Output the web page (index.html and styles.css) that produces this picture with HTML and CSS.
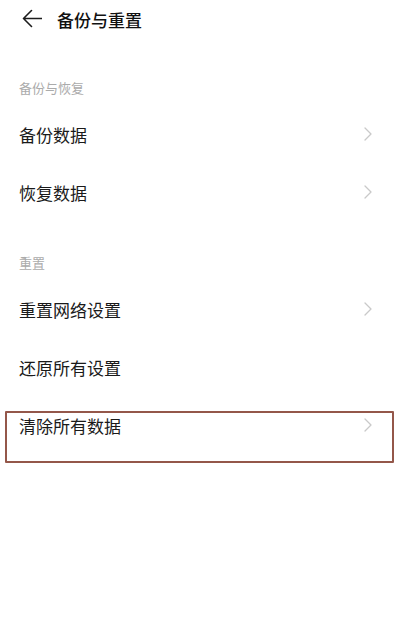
FILE: index.html
```html
<!DOCTYPE html>
<html lang="zh-CN">
<head>
<meta charset="utf-8">
<title>备份与重置</title>
<link rel="stylesheet" href="styles.css">
</head>
<body>
<div class="page">
  <header class="topbar">
    <svg class="back" width="20" height="20" viewBox="0 0 20 20" aria-hidden="true">
      <path d="M19.5 9.5H1.5M9.5 1.5L1.5 9.5L9.5 17.5" fill="none" stroke="#1c1c1c" stroke-width="1.6" stroke-linecap="round" stroke-linejoin="round"/>
    </svg>
    <h1 class="title">备份与重置</h1>
  </header>

  <section class="group group-first">
    <div class="group-label">备份与恢复</div>
    <div class="row"><span class="row-text">备份数据</span><svg class="chev" width="8" height="14" viewBox="0 0 8 14"><path d="M1 1L7 7L1 13" fill="none" stroke="#c9c9c9" stroke-width="1.3" stroke-linecap="round" stroke-linejoin="round"/></svg></div>
    <div class="row"><span class="row-text">恢复数据</span><svg class="chev" width="8" height="14" viewBox="0 0 8 14"><path d="M1 1L7 7L1 13" fill="none" stroke="#c9c9c9" stroke-width="1.3" stroke-linecap="round" stroke-linejoin="round"/></svg></div>
  </section>

  <section class="group">
    <div class="group-label">重置</div>
    <div class="row"><span class="row-text">重置网络设置</span><svg class="chev" width="8" height="14" viewBox="0 0 8 14"><path d="M1 1L7 7L1 13" fill="none" stroke="#c9c9c9" stroke-width="1.3" stroke-linecap="round" stroke-linejoin="round"/></svg></div>
    <div class="row"><span class="row-text">还原所有设置</span></div>
    <div class="row row-marked"><span class="row-text">清除所有数据</span><svg class="chev" width="8" height="14" viewBox="0 0 8 14"><path d="M1 1L7 7L1 13" fill="none" stroke="#c9c9c9" stroke-width="1.3" stroke-linecap="round" stroke-linejoin="round"/></svg><span class="highlight"></span></div>
  </section>
</div>
</body>
</html>
```

FILE: styles.css
```css
html, body {
  margin: 0;
  padding: 0;
  background: #ffffff;
}

body {
  font-family: "Noto Sans CJK SC", "Noto Sans", sans-serif;
  color: #1a1a1a;
}

.page {
  width: 404px;
  min-height: 637px;
  background: #ffffff;
}

.topbar {
  height: 38px;
  display: flex;
  align-items: center;
  padding-left: 22px;
}

.back {
  display: block;
  flex: none;
}

.title {
  margin: 0 0 0 15px;
  font-size: 17px;
  font-weight: 500;
  line-height: 1;
  color: #111111;
}

.group {
  margin-top: 23px;
}

.group-first {
  margin-top: 31px;
}

.group-label {
  height: 36px;
  display: flex;
  align-items: center;
  padding-left: 19px;
  font-size: 13px;
  color: #ababab;
  line-height: 1;
}

.row {
  position: relative;
  height: 58px;
  display: flex;
  align-items: center;
  justify-content: space-between;
  padding-left: 19px;
  padding-right: 32px;
}

.row-text {
  font-size: 17px;
  line-height: 1;
  color: #1a1a1a;
}

.chev {
  display: block;
  flex: none;
}

.highlight {
  position: absolute;
  left: 5px;
  top: 15px;
  width: 385px;
  height: 48px;
  border: 2px solid #94574a;
  border-radius: 1px;
  pointer-events: none;
}
```
